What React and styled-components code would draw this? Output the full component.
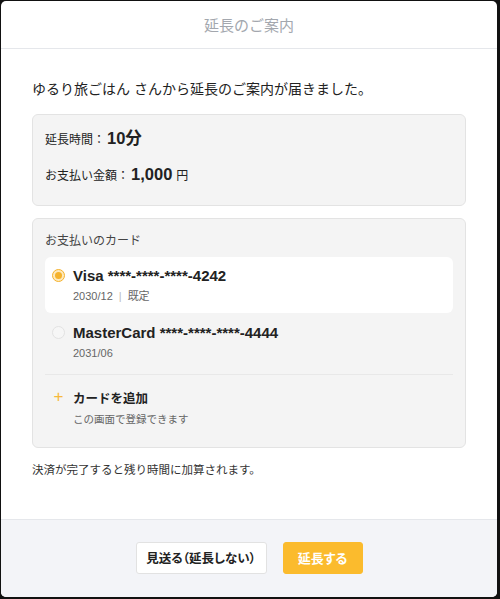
import React from 'react';
import styled, { createGlobalStyle } from 'styled-components';

const GlobalStyle = createGlobalStyle`
  html, body {
    margin: 0;
    padding: 0;
    background: #111;
  }
  body {
    font-family: "Liberation Sans", "Noto Sans CJK JP", sans-serif;
    color: #222;
  }
  * {
    box-sizing: border-box;
  }
`;

const Modal = styled.div`
  width: 496px;
  height: 596px;
  margin: 1px 0 0 1px;
  background: #fff;
  border-radius: 5px;
  overflow: hidden;
  display: flex;
  flex-direction: column;
`;

const Header = styled.div`
  height: 48px;
  display: flex;
  align-items: center;
  justify-content: center;
  border-bottom: 1px solid #e5e7eb;
  color: #a3a7ae;
  font-size: 15px;
`;

const Body = styled.div`
  flex: 1;
  padding: 30px 31px 0 31px;
  display: flex;
  flex-direction: column;
`;

const Intro = styled.p`
  margin: 0 0 15px;
  font-size: 14px;
  line-height: 20px;
  color: #222;
`;

const Panel = styled.div`
  background: #f4f4f4;
  border: 1px solid #e3e3e3;
  border-radius: 6px;
  padding: ${(p) => p.$pad};
  margin-bottom: ${(p) => p.$mb || '0'};
`;

const SummaryRow = styled.div`
  display: flex;
  align-items: baseline;
  font-size: 12px;
  line-height: 24px;
  height: 24px;
  color: #222;
  & + & {
    margin-top: 12px;
  }
`;

const Big = styled.strong`
  font-size: ${(p) => p.$size || '16px'};
  font-weight: 700;
  margin: 0 4px 0 2px;
`;

const PanelTitle = styled.div`
  font-size: 12px;
  color: #444;
  line-height: 16px;
  margin: 0 0 8px 12px;
`;

const CardOption = styled.div`
  display: flex;
  align-items: flex-start;
  gap: 8px;
  margin: 0 12px;
  padding: ${(p) => p.$pt || '9px'} 12px 0 7px;
  height: ${(p) => p.$h};
  background: ${(p) => (p.$selected ? '#fff' : 'transparent')};
  border-radius: 6px;
`;

const Radio = styled.span`
  flex: none;
  width: 13px;
  height: 13px;
  margin-top: 3px;
  border-radius: 50%;
  border: 1px solid ${(p) => (p.$checked ? '#f5b22c' : '#e2e2e2')};
  background: ${(p) => (p.$checked ? '#fde9bd' : '#f6f6f6')};
  display: flex;
  align-items: center;
  justify-content: center;
  &::after {
    content: '';
    display: ${(p) => (p.$checked ? 'block' : 'none')};
    width: 7px;
    height: 7px;
    border-radius: 50%;
    background: #f5b22c;
  }
`;

const Plus = styled.span`
  flex: none;
  width: 13px;
  height: 13px;
  margin-top: 1px;
  color: #f7b93a;
  font-size: 17px;
  line-height: 13px;
  text-align: center;
`;

const OptionText = styled.div`
  display: flex;
  flex-direction: column;
`;

const OptionTitle = styled.div`
  font-size: ${(p) => p.$size || '15px'};
  font-weight: 700;
  line-height: 20px;
  color: #222;
`;

const OptionSub = styled.div`
  font-size: ${(p) => p.$size || '11px'};
  line-height: 16px;
  margin-top: 2px;
  color: #666;
`;

const Sep = styled.span`
  color: #bbb;
  margin: 0 6px;
`;

const Divider = styled.div`
  height: 1px;
  background: #e8e8e8;
  margin: 0 12px;
`;

const Note = styled.p`
  margin: 14px 0 0;
  font-size: 11.5px;
  line-height: 16px;
  color: #333;
`;

const Footer = styled.div`
  height: 78px;
  background: #f3f4f8;
  border-top: 1px solid #e5e7eb;
  display: flex;
  align-items: center;
  justify-content: center;
  gap: 16px;
  padding-bottom: 2px;
`;

const Button = styled.button`
  height: 32px;
  width: ${(p) => p.$w};
  padding: 0;
  border-radius: 3px;
  border: 1px solid ${(p) => (p.$primary ? '#fbbb2d' : '#e2e2e2')};
  background: ${(p) => (p.$primary ? '#fbbb2d' : '#fff')};
  color: ${(p) => (p.$primary ? '#fff' : '#222')};
  font-family: inherit;
  font-size: ${(p) => (p.$primary ? '13px' : '12.5px')};
  font-weight: 700;
  font-feature-settings: "palt";
  cursor: pointer;
`;

export default function App() {
  return (
    <>
      <GlobalStyle />
      <Modal>
        <Header>延長のご案内</Header>
        <Body>
          <Intro>ゆるり旅ごはん さんから延長のご案内が届きました。</Intro>
          <Panel $pad="11px 12px 19px" $mb="12px">
            <SummaryRow>
              延長時間：<Big $size="16.5px">10分</Big>
            </SummaryRow>
            <SummaryRow>
              お支払い金額：<Big $size="16.5px">1,000</Big>円
            </SummaryRow>
          </Panel>
          <Panel $pad="14px 0 14px">
            <PanelTitle>お支払いのカード</PanelTitle>
            <CardOption $selected $h="56px">
              <Radio $checked />
              <OptionText>
                <OptionTitle>Visa ****-****-****-4242</OptionTitle>
                <OptionSub>
                  2030/12<Sep>|</Sep>既定
                </OptionSub>
              </OptionText>
            </CardOption>
            <CardOption $h="61px" $pt="10px">
              <Radio />
              <OptionText>
                <OptionTitle>MasterCard ****-****-****-4444</OptionTitle>
                <OptionSub>2031/06</OptionSub>
              </OptionText>
            </CardOption>
            <Divider />
            <CardOption $h="58px" $pt="14px">
              <Plus>+</Plus>
              <OptionText>
                <OptionTitle $size="12.5px">カードを追加</OptionTitle>
                <OptionSub $size="10.5px">この画面で登録できます</OptionSub>
              </OptionText>
            </CardOption>
          </Panel>
          <Note>決済が完了すると残り時間に加算されます。</Note>
        </Body>
        <Footer>
          <Button $w="131px">見送る（延長しない）</Button>
          <Button $primary $w="80px">延長する</Button>
        </Footer>
      </Modal>
    </>
  );
}
